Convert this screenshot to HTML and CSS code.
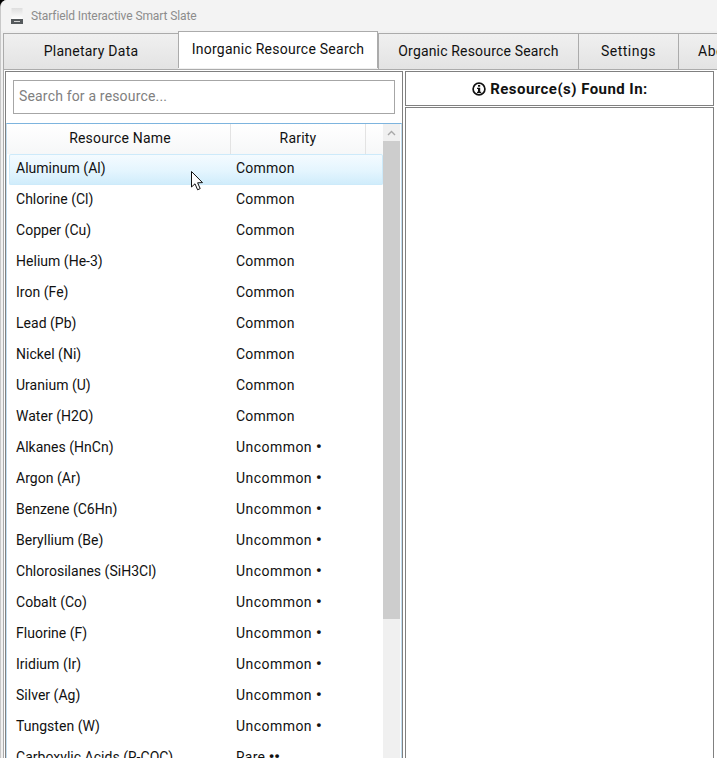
FILE: index.html
```html
<!DOCTYPE html>
<html lang="en">
<head>
<meta charset="utf-8">
<title>Starfield Interactive Smart Slate</title>
<link rel="stylesheet" href="styles.css">
</head>
<body>
<div class="window">
  <header class="titlebar">
    <svg class="app-icon" width="12" height="16" viewBox="0 0 12 16">
      <defs><linearGradient id="slate" x1="0" y1="0" x2="0" y2="1"><stop offset="0" stop-color="#dedede"/><stop offset="1" stop-color="#ffffff"/></linearGradient></defs>
      <rect x="0.5" y="0" width="11" height="11" fill="url(#slate)"/>
      <rect x="0" y="11" width="12" height="5" fill="#55595c"/>
      <rect x="3" y="13" width="6" height="1" fill="#d5d5d5"/>
    </svg>
    <span class="title-text">Starfield Interactive Smart Slate</span>
  </header>
  <nav class="tabs">
    <div class="tab tab-planetary">Planetary Data</div>
    <div class="tab tab-active">Inorganic Resource Search</div>
    <div class="tab tab-organic">Organic Resource Search</div>
    <div class="tab tab-settings">Settings</div>
    <div class="tab tab-about">About</div>
  </nav>
  <main class="panes">
    <section class="left-pane">
      <div class="search-wrap"><div class="search">Search for a resource...</div></div>
      <div class="table-frame">
        <div class="table-main">
          <div class="thead">
            <div class="th th-name">Resource Name</div>
            <div class="th th-rarity">Rarity</div>
            <div class="th th-fill"></div>
          </div>
          <div class="tbody">
            <div class="row row-hover"><span class="c-name">Aluminum (Al)</span><span class="c-rarity">Common</span></div>
            <div class="row"><span class="c-name">Chlorine (Cl)</span><span class="c-rarity">Common</span></div>
            <div class="row"><span class="c-name">Copper (Cu)</span><span class="c-rarity">Common</span></div>
            <div class="row"><span class="c-name">Helium (He-3)</span><span class="c-rarity">Common</span></div>
            <div class="row"><span class="c-name">Iron (Fe)</span><span class="c-rarity">Common</span></div>
            <div class="row"><span class="c-name">Lead (Pb)</span><span class="c-rarity">Common</span></div>
            <div class="row"><span class="c-name">Nickel (Ni)</span><span class="c-rarity">Common</span></div>
            <div class="row"><span class="c-name">Uranium (U)</span><span class="c-rarity">Common</span></div>
            <div class="row"><span class="c-name">Water (H2O)</span><span class="c-rarity">Common</span></div>
            <div class="row"><span class="c-name">Alkanes (HnCn)</span><span class="c-rarity c-long">Uncommon <b class="dot">•</b></span></div>
            <div class="row"><span class="c-name">Argon (Ar)</span><span class="c-rarity c-long">Uncommon <b class="dot">•</b></span></div>
            <div class="row"><span class="c-name">Benzene (C6Hn)</span><span class="c-rarity c-long">Uncommon <b class="dot">•</b></span></div>
            <div class="row"><span class="c-name">Beryllium (Be)</span><span class="c-rarity c-long">Uncommon <b class="dot">•</b></span></div>
            <div class="row"><span class="c-name">Chlorosilanes (SiH3Cl)</span><span class="c-rarity c-long">Uncommon <b class="dot">•</b></span></div>
            <div class="row"><span class="c-name">Cobalt (Co)</span><span class="c-rarity c-long">Uncommon <b class="dot">•</b></span></div>
            <div class="row"><span class="c-name">Fluorine (F)</span><span class="c-rarity c-long">Uncommon <b class="dot">•</b></span></div>
            <div class="row"><span class="c-name">Iridium (Ir)</span><span class="c-rarity c-long">Uncommon <b class="dot">•</b></span></div>
            <div class="row"><span class="c-name">Silver (Ag)</span><span class="c-rarity c-long">Uncommon <b class="dot">•</b></span></div>
            <div class="row"><span class="c-name">Tungsten (W)</span><span class="c-rarity c-long">Uncommon <b class="dot">•</b></span></div>
            <div class="row"><span class="c-name">Carboxylic Acids (R-COC)</span><span class="c-rarity">Rare <b class="dot">••</b></span></div>
          </div>
        </div>
        <div class="scrollbar">
          <div class="scroll-up"><svg width="9" height="6" viewBox="0 0 9 6"><path d="M1 5 L4.5 1.5 L8 5" fill="none" stroke="#a8a8a8" stroke-width="1.4"/></svg></div>
          <div class="scroll-thumb"></div>
        </div>
      </div>
    </section>
    <section class="right-pane">
      <div class="found-head">
        <svg class="info" width="14" height="14" viewBox="0 0 14 14"><circle cx="7" cy="7" r="5.9" fill="none" stroke="#111" stroke-width="1.7"/><rect x="6" y="3" width="2.2" height="1.7" fill="#111"/><path d="M5 5.7 H8.2 V9.7 H9.2 V11 H5 V9.7 H6 V7 H5 Z" fill="#111"/></svg>
        <span>Resource(s) Found In:</span>
      </div>
      <div class="found-body"></div>
    </section>
  </main>
  <svg class="cursor" width="14" height="21" viewBox="0 0 14 21"><path d="M0.5 0.5 L0.5 16 L4 12.8 L6.6 18.8 L9.2 17.6 L6.6 11.8 L11.5 11.6 Z" fill="#fff" stroke="#111" stroke-width="1"/></svg>
</div>
</body>
</html>
```
FILE: styles.css
```css
html, body { margin: 0; padding: 0; height: 100%; background: #000; overflow: hidden; }
body { font-family: Roboto, "Liberation Sans", sans-serif; color: #111; }
.window {
  position: relative; width: 717px; height: 758px; overflow: hidden;
  background: #f0f0f0; border-top-left-radius: 7px; box-sizing: border-box;
  border-left: 1px solid #c8c8c8;
  display: flex; flex-direction: column;
}
.titlebar {
  height: 31px; flex: none; background: #f3f3f3; display: flex; align-items: center;
  padding-left: 10px; gap: 8px; box-sizing: border-box;
}
.app-icon { flex: none; }
.title-text { font-size: 12px; color: #8c8c8c; letter-spacing: -.1px; }
.tabs { display: flex; height: 38px; flex: none; padding-left: 2px; }
.tab {
  box-sizing: border-box; height: 36px; margin-top: 2px; border: 1px solid #ababab;
  border-bottom: 0; border-right-width: 0; background: linear-gradient(#f0f0f0, #e3e3e3);
  font-size: 14px; letter-spacing: .25px; text-align: center; line-height: 34px; white-space: nowrap; flex: none;
}
.tab-planetary { width: 175px; }
.tab-active { width: 200px; height: 37px; margin-top: 0; background: #fff; line-height: 34px; border-right-width: 1px; }
.tab-organic { width: 200px; letter-spacing: .17px; }
.tab-settings { width: 100px; letter-spacing: .5px; }
.tab-about { width: 80px; padding-left: 19px; text-align: left; letter-spacing: .5px; }
.panes {
  flex: 1; display: flex; min-height: 0; overflow: hidden; background: #fff;
  margin-left: 2px; border-top: 1px solid #ababab; border-left: 1px solid #ababab;
  padding: 1px 3px 0 1px; gap: 2px;
}
.left-pane { width: 398px; flex: none; box-sizing: border-box; background: #fff; border: 1px solid #808080; padding: 8px 0 0; margin-bottom: -3px; display: flex; flex-direction: column; }
.search-wrap { padding: 0 7px; }
.search {
  height: 34px; box-sizing: border-box; border: 1px solid #a6a6a6; padding: 0 5px; line-height: 31px;
  font-size: 14px; letter-spacing: .17px; color: #808080;
}
.table-frame { margin-top: 9px; border-top: 1px solid #7db4de; border-left: 1px solid #c3def0; border-right: 1px solid #c3def0; flex: 1; display: flex; min-height: 0; overflow: hidden; }
.table-main { width: 376px; flex: none; }
.thead { display: flex; height: 30px; background: linear-gradient(#fff, #f6f7f8); }
.th { box-sizing: border-box; border-right: 1px solid #e3e3e3; font-size: 14px; letter-spacing: .2px; text-align: center; line-height: 28px; }
.th-name { width: 224px; padding-left: 3px; }
.th-rarity { width: 135px; }
.th-fill { flex: 1; border-right: 0; }
.tbody { padding-left: 1px; }
.row { display: flex; height: 31px; align-items: center; font-size: 14px; box-sizing: border-box; white-space: nowrap; padding-bottom: 4px; }
.row-hover { background: linear-gradient(#f5fbff 0, #e4f5fe 55%, #cfecfb 100%); box-shadow: inset 0 0 0 1px #cdeafa; border-radius: 2px; margin-left: 1px; }
.row-hover .c-name { width: 219px; padding-left: 7px; }
.c-name { width: 220px; padding-left: 8px; box-sizing: border-box; flex: none; letter-spacing: .02px; }
.c-rarity { padding-left: 8px; letter-spacing: .2px; }
.c-long { letter-spacing: .45px; }
.dot { font-size: 15px; font-weight: 900; line-height: 0; letter-spacing: 0; }
.scrollbar { width: 17px; flex: none; background: #f0f0f0; display: flex; flex-direction: column; }
.scroll-up { height: 17px; display: flex; align-items: center; justify-content: center; }
.scroll-thumb { height: 478px; background: #cdcdcd; }
.right-pane { flex: 1; display: flex; flex-direction: column; gap: 1px; margin-bottom: -3px; }
.found-head {
  height: 35px; flex: none; box-sizing: border-box; background: #fff; border: 1px solid #808080;
  display: flex; align-items: center; justify-content: center; gap: 4px; padding-left: 1px;
  font-size: 15px; font-weight: 700; letter-spacing: .45px;
}
.found-body { flex: 1; background: #fff; border: 1px solid #808080; }
.cursor { position: absolute; left: 190px; top: 171px; }
```
